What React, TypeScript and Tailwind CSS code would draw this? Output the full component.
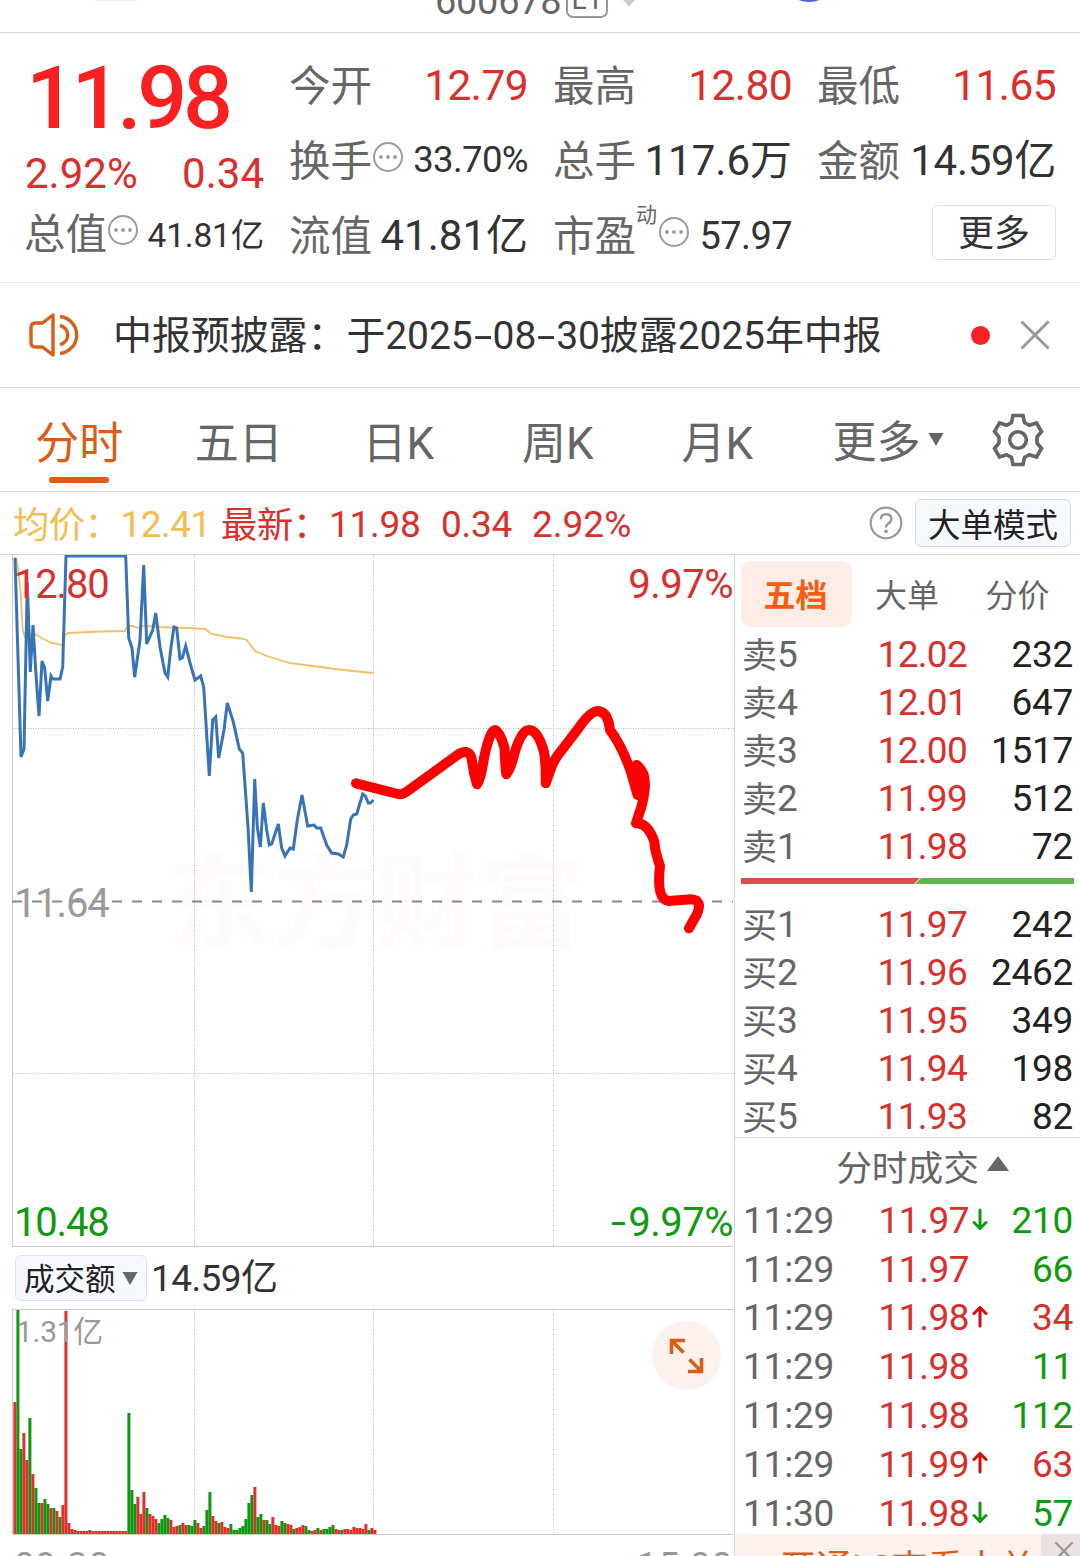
import { X } from "lucide-react";
import clsx from "clsx";

type Tone = "up" | "down";

interface Level {
  side: string;
  no: number;
  price: string;
  volume: string;
}

interface Tick {
  time: string;
  price: string;
  volume: string;
  tone: Tone;
  move?: Tone;
}

const sells: Level[] = [
  { side: "卖", no: 5, price: "12.02", volume: "232" },
  { side: "卖", no: 4, price: "12.01", volume: "647" },
  { side: "卖", no: 3, price: "12.00", volume: "1517" },
  { side: "卖", no: 2, price: "11.99", volume: "512" },
  { side: "卖", no: 1, price: "11.98", volume: "72" },
];

const buys: Level[] = [
  { side: "买", no: 1, price: "11.97", volume: "242" },
  { side: "买", no: 2, price: "11.96", volume: "2462" },
  { side: "买", no: 3, price: "11.95", volume: "349" },
  { side: "买", no: 4, price: "11.94", volume: "198" },
  { side: "买", no: 5, price: "11.93", volume: "82" },
];

const ticks: Tick[] = [
  { time: "11:29", price: "11.97", volume: "210", tone: "down", move: "down" },
  { time: "11:29", price: "11.97", volume: "66", tone: "down" },
  { time: "11:29", price: "11.98", volume: "34", tone: "up", move: "up" },
  { time: "11:29", price: "11.98", volume: "11", tone: "down" },
  { time: "11:29", price: "11.98", volume: "112", tone: "down" },
  { time: "11:29", price: "11.99", volume: "63", tone: "up", move: "up" },
  { time: "11:30", price: "11.98", volume: "57", tone: "down", move: "down" },
];

const tabs = ["分时", "五日", "日K", "周K", "月K"];

// 分时价格线
const priceLine =
  "15,2.7 21,202 24,194 27.3,27 30.3,117 33,70 36,120 39,161 42,106 44.7,113 47.7,146 51,121 52.7,124 60,124 62.7,112 66,1 125.7,1 128.7,83 132,93 134.7,122 140,85 143.7,10 146.7,89 152.7,75 155.7,58 160,92 165,118 167.7,122 171,92 174,72 176.7,73 180,104 182.3,103 185.7,91 190,108 195,125 200.7,121 203.7,132 209.3,221 212.7,165 215.7,162 218.7,203 224,175 227.3,148 233.3,167 239.3,194 242.7,198 248,272 251.3,337 254.7,224 257.3,272 260.3,292 263.3,248 266.7,275 269.3,290 271.7,289 278.3,269 281.7,293 285,301 290,293 293.3,294 297.3,265 302,240 307.7,271 314,270 316.7,273 320.7,273 326.7,290 331.7,298 338.3,299 343.3,302 346.7,290 350.7,264 353.3,260 356.7,259 362.7,239 365.3,241 368.3,248 370.3,248 373.5,245";

// 均价线
const averageLine =
  "16,3 17.3,8 20.7,38 22.7,75 25,82 30,79 35,79 41.7,83 51.7,88 62.3,90 65,80 68.3,78 100,76.5 125,76 127.3,71 132.7,71 138.3,73 143.3,71 160,72 186.7,73 205,74 211.7,79 226.7,82 241.7,83.5 246.7,85 255,96 266.7,101 290,108 320,112 343.3,115 373.3,118";

// 手绘预测走势
const sketchPath =
  "M356 228.3 L398 239 Q402 240 407 236.500 L456 201 Q468 192 471.500 203 Q473 212 474 218 L477 229.300 Q481 224 484 203 Q490 175 495 175 Q500 177 504.500 193 Q505 208 506.300 219.300 Q511 213 514 200 Q521 175 529 175 Q538 175 544 197 Q546 208 545.700 228.300 Q548 222 550 216 Q553 207 558 200 L578 174 Q590 156 598.300 156 Q608 157 610 175 Q622 191 631 217 L637.500 240 L640 225 L636.700 210 Q647 218 644.500 236 Q643 248 640 256 L636 268.300 Q648 268 654.300 286.700 Q655 297 660 311 Q656 345 669 346 L691 344.300 Q703 345 697 359 L689 373.300";

const volumes =
  "r132 g224 g85 r101 r74 g116 r60 g46 g31 r31 g35 g30 r26 g26 r23 g17 r29 r223 r11 r5 r4 r3 r3 r3 r3 r4 r3 r3 r3 r3 r3 r3 r3 r3 r3 r3 r3 r3 g121 g44 g30 r37 r20 r42 g26 r20 r18 r15 g11 g15 g19 g16 r14 r7 r8 g9 r11 r9 g9 g8 g14 r11 r6 g8 g24 g42 r18 r13 g11 r12 r7 r6 g10 g4 g4 g6 g8 g15 g31 g39 r47 g17 g20 r14 g14 g10 r17 r9 r8 g13 g11 r10 r9 g5 r6 r7 r9 g8 g4 r3 r4 g6 r4 g5 g5 g7 g9 r5 r4 g4 r5 r5 r4 r7 r6 r6 r5 r10 g4 r6 r4".split(
    " "
  );

function MoreDots() {
  return (
    <svg width="32" height="32" viewBox="0 0 32 32" className="shrink-0">
      <circle cx="16" cy="16" r="14" fill="none" stroke="#9b9b9b" strokeWidth="2" />
      <circle cx="9" cy="16" r="1.9" fill="#9b9b9b" />
      <circle cx="16" cy="16" r="1.9" fill="#9b9b9b" />
      <circle cx="23" cy="16" r="1.9" fill="#9b9b9b" />
    </svg>
  );
}

function Triangle({ up = false }: { up?: boolean }) {
  return (
    <svg width="22" height="15" viewBox="0 0 22 15" className="shrink-0">
      <path d={up ? "M0 15 L11 0 L22 15 Z" : "M3.500 1 L18.500 1 L11 14 Z"} fill="#666" />
    </svg>
  );
}

function MoveArrow({ move }: { move: Tone }) {
  return (
    <svg width="16" height="24" viewBox="0 0 16 24" fill="none" strokeWidth="3" strokeLinecap="round">
      {move === "up" ? (
        <path d="M8 20 V1.500 M2 7.500 L8 1.500 L14 7.500" stroke="#d80c0c" />
      ) : (
        <path d="M8 2 V20.500 M2 14.500 L8 20.500 L14 14.500" stroke="#0f9a0f" />
      )}
    </svg>
  );
}

// 日期里的短横比字体自带的宽
function DateDash() {
  return <span className="inline-block w-5 scale-x-[1.7] text-center">-</span>;
}

function QuoteItem({
  label,
  value,
  valueClass = "text-[42px] text-[#333]",
  dots = false,
  sup,
}: {
  label: string;
  value: string;
  valueClass?: string;
  dots?: boolean;
  sup?: string;
}) {
  return (
    <div className="flex h-[75px] items-center justify-between">
      <div className="-ml-px flex items-center">
        <span className="pt-[3px] text-[41.5px] text-[#666]">{label}</span>
        {sup && <span className="-mt-10 w-[22px] text-[21px] text-[#666]">{sup}</span>}
        {dots && (
          <span className="-mt-2">
            <MoreDots />
          </span>
        )}
      </div>
      <span className={valueClass}>{value}</span>
    </div>
  );
}

function LevelRow({ level }: { level: Level }) {
  return (
    <div className="flex h-12 items-center text-[37px]">
      <span className="flex w-[110px] items-center text-[#666]">
        <span className="pt-1 text-[35px]">{level.side}</span>
        {level.no}
      </span>
      <span className="w-[115px] text-right tracking-[-0.7px] text-[#d9302e]">{level.price}</span>
      <span className="flex-1 text-right tracking-[-0.3px] text-[#222]">{level.volume}</span>
    </div>
  );
}

export default function App() {
  return (
    <div className="flex h-[1556px] w-[1080px] flex-col overflow-hidden bg-white font-['Roboto','Noto_Sans_CJK_SC',sans-serif] leading-none whitespace-nowrap">
      {/* 顶部标题栏(滚动后只露出底边) */}
      <header className="relative h-[33px] shrink-0 border-b border-[#d5d6da]">
        <span className="absolute top-[-18px] left-[435px] text-[38px] tracking-[-0.3px] text-[#666]">
          600678
        </span>
        <span className="absolute top-[-22px] left-[566px] flex h-10 w-[42px] items-end justify-center rounded-[7px] border-2 border-[#999] pb-0.5 text-[28px] text-[#666]">
          L1
        </span>
        <svg width="14" height="8" viewBox="0 0 14 8" className="absolute top-0 left-[622px]">
          <path d="M0 -1 H14 L7 6.500 Z" fill="#ccc" />
        </svg>
        <span className="absolute -top-14 left-[780px] h-[58px] w-[58px] rounded-full bg-[#4864d8]" />
        <span className="absolute top-0 left-[95px] h-px w-[43px] bg-[#fbeee6]" />
      </header>

      {/* 行情摘要 */}
      <section className="grid h-[250px] shrink-0 grid-cols-[239px_238px_238px_238px] gap-x-[26px] border-b border-[#ececec] pt-[15px] pl-[25px]">
        <div>
          <div className="ml-px h-[103px] pt-[6px] text-[88px] leading-[88px] font-medium tracking-[-4.4px] text-[#f82020]">
            11.98
          </div>
          <div className="flex h-[45px] items-center justify-between text-[42px] text-[#d9302e]">
            <span>2.92%</span>
            <span>0.34</span>
          </div>
          <QuoteItem label="总值" value="41.81亿" dots valueClass="pt-1 text-[33.5px] tracking-[-0.2px] text-[#333]" />
        </div>
        <div>
          <QuoteItem label="今开" value="12.79" valueClass="pt-0.5 text-[42.5px] tracking-[-0.6px] text-[#d9302e]" />
          <QuoteItem label="换手" value="33.70%" dots valueClass="text-[36.5px] tracking-[-0.6px] text-[#333]" />
          <QuoteItem label="流值" value="41.81亿" />
        </div>
        <div>
          <QuoteItem label="最高" value="12.80" valueClass="pt-0.5 text-[42.5px] tracking-[-0.6px] text-[#d9302e]" />
          <QuoteItem label="总手" value="117.6万" />
          <QuoteItem label="市盈" value="57.97" sup="动" dots valueClass="text-[38px] tracking-[-0.6px] text-[#333]" />
        </div>
        <div>
          <QuoteItem label="最低" value="11.65" valueClass="pt-0.5 text-[42.5px] tracking-[-0.6px] text-[#d9302e]" />
          <QuoteItem label="金额" value="14.59亿" valueClass="text-[42px] tracking-[-0.3px] text-[#333]" />
          <div className="flex h-[68px] items-center justify-end">
            <button className="h-[55px] w-[124px] rounded-md border border-[#e2e2e6] pt-1 text-[36px] text-[#333]">
              更多
            </button>
          </div>
        </div>
      </section>

      {/* 公告 */}
      <section className="flex h-[105px] shrink-0 items-center border-b border-[#d8d8d8] pl-[29px]">
        <svg width="52" height="44" viewBox="0 0 52 44" fill="none" stroke="#d95f16" strokeWidth="3.400">
          <path d="M24 2 V42 L13.500 34 H6.500 Q2 34 2 29.500 V14.500 Q2 10 6.500 10 H13.500 Z" strokeLinejoin="round" />
          <path d="M31 12.500 A9.700 9.700 0 0 1 31 31.500" />
          <path d="M31 3.500 A18.600 18.600 0 0 1 31 40.500" />
        </svg>
        <span className="ml-8 pt-[3px] text-[39px] tracking-[-0.1px] text-[#333]">
          中报预披露：于2025
          <DateDash />
          08
          <DateDash />
          30披露2025年中报
        </span>
        <span className="mr-[25px] ml-auto h-[19px] w-[19px] rounded-full bg-[#f82020]" />
        <svg width="40" height="40" viewBox="0 0 40 40" className="mr-[25px]">
          <path d="M6.500 6.500 L33.500 33.500 M33.500 6.500 L6.500 33.500" stroke="#999" strokeWidth="3" />
        </svg>
      </section>

      {/* 周期切换 */}
      <nav className="flex h-[104px] shrink-0 border-b border-[#d8d8d8] text-[44px] text-[#666]">
        {tabs.map((tab, i) => (
          <div
            key={tab}
            className={clsx(
              "-ml-px flex w-[160.5px] flex-col items-center pt-[34px]",
              i === 0 && "text-[#dd5b12]"
            )}
          >
            <span>{tab}</span>
            {i === 0 && <span className="mt-[11px] h-1.5 w-[60px] rounded-full bg-[#e0590f]" />}
          </div>
        ))}
        <div className="flex h-full items-center pl-[35px]">
          <span className="pt-1.5">更多</span>
          <span className="ml-1">
            <Triangle />
          </span>
        </div>
        <svg
          width="54"
          height="54"
          viewBox="0 0 54 54"
          className="mt-[25px] ml-11"
          fill="none"
          stroke="#666"
          strokeWidth="3.600"
        >
          <path d="M22 2.500 H32 L33.500 9.500 L38.500 12.300 L45.500 10 L50.500 18.500 L46 24 V30 L50.500 35.500 L45.500 44 L38.500 41.700 L33.500 44.500 L32 51.500 H22 L20.500 44.500 L15.500 41.700 L8.500 44 L3.500 35.500 L8 30 V24 L3.500 18.500 L8.500 10 L15.500 12.300 L20.500 9.500 Z" />
          <circle cx="27" cy="27" r="8.300" />
        </svg>
      </nav>

      {/* 均价 / 最新 */}
      <section className="flex h-[63px] shrink-0 items-center border-b border-[#d5d6da] pl-[13px] text-[37px] text-[#d9302e]">
        <span className="flex w-[208px] items-center tracking-[-0.5px] text-[#f3bd50]">
          <span className="pt-1.5 text-[36.3px]">均价：</span>
          <span className="pt-[3px]">12.41</span>
        </span>
        <span className="flex w-[220px] items-center tracking-[-0.3px]">
          <span className="pt-1.5 text-[36.3px]">最新：</span>
          <span className="pt-[3px]">11.98</span>
        </span>
        <span className="w-[91px] pt-0.5 tracking-[-0.3px]">0.34</span>
        <span className="pt-0.5">2.92%</span>
        <svg width="34" height="34" viewBox="0 0 34 34" className="mr-3 ml-auto">
          <circle cx="17" cy="17" r="15.300" fill="none" stroke="#999" strokeWidth="2.200" />
          <path
            d="M11.800 13.300 Q12 8.300 17 8.300 Q22.300 8.300 22.300 13 Q22.300 15.500 19.500 17.300 Q17 18.900 17 21.500"
            fill="none"
            stroke="#999"
            strokeWidth="2.400"
          />
          <circle cx="17" cy="25.300" r="1.900" fill="#999" />
        </svg>
        <button className="mr-[9px] h-12 w-[156px] rounded-md border border-[#d5d9e2] bg-[#f6f9ff] pt-1.5 text-[32.5px] text-[#222]">
          大单模式
        </button>
      </section>

      <main className="flex min-h-0 flex-1">
        <div className="w-[734px] shrink-0">
          {/* 分时图 */}
          <div className="relative h-[692px]">
            <svg width="734" height="692" viewBox="0 0 734 692" className="block" fill="none">
              <text
                x="168"
                y="385"
                fontSize="103"
                fontWeight="700"
                letterSpacing="1"
                fill="#fefafe"
                className="font-['Noto_Sans_CJK_SC',sans-serif]"
              >
                东方财富
              </text>
              <g stroke="#bbb" strokeDasharray="1 1.500">
                <path d="M194.500 0 V691 M373.500 0 V691 M553.500 0 V691" />
                <path d="M13 173.500 H734 M13 518.500 H734" />
              </g>
              <path d="M12.500 0 V691.500 H733" stroke="#ccc" />
              <path d="M12 346.500 H733" stroke="#888" strokeWidth="2" strokeDasharray="10 10" />
              <polyline points={averageLine} stroke="#f0c062" strokeWidth="1.800" />
              <polyline points={priceLine} stroke="#3873b8" strokeWidth="3" />
              <path
                d={sketchPath}
                stroke="#ff0000"
                strokeWidth="10"
                strokeLinecap="round"
                strokeLinejoin="round"
              />
            </svg>
            <span className="absolute top-[10px] left-3.5 text-[40px] tracking-[-1.2px] text-[#d9302e]">12.80</span>
            <span className="absolute top-[10px] right-px text-[40px] tracking-[-0.5px] text-[#d9302e]">9.97%</span>
            <span className="absolute top-[329px] left-3.5 text-[40px] tracking-[-1.2px] text-[#9b9b9b]">11.64</span>
            <span className="absolute top-[648px] left-3.5 text-[40px] tracking-[-1.2px] text-[#0f9a0f]">10.48</span>
            <span className="absolute top-[648px] right-px text-[40px] tracking-[-0.5px] text-[#0f9a0f]">
              <span className="inline-block w-[17px] origin-left scale-x-[1.35]">-</span>
              9.97%
            </span>
          </div>

          {/* 成交额 */}
          <div className="flex h-[62px] items-center pl-[15px]">
            <button className="flex h-[46px] w-[132px] items-center rounded-md border border-[#dfe3ec] bg-[#f6f9ff] pl-2 text-[30.5px] text-[#222]">
              <span className="pt-1">成交额</span>
              <span className="ml-[3px]">
                <Triangle />
              </span>
            </button>
            <span className="ml-1 text-[37px] tracking-[-0.6px] text-[#333]">14.59亿</span>
          </div>
          <div className="relative h-[226px]">
            <svg width="734" height="226" viewBox="0 0 734 226" className="block">
              <path d="M733 0.500 H12.500 V225.500 H733" fill="none" stroke="#ccc" />
              <path
                d="M194.500 0 V225 M373.500 0 V225 M553.500 0 V225"
                stroke="#bbb"
                strokeDasharray="1 1.500"
              />
              {volumes.map((bar, i) => {
                const height = Number(bar.slice(1));
                return (
                  <rect
                    key={i}
                    x={13.4 + i * 3}
                    y={225 - height}
                    width="3"
                    height={height}
                    fill={bar[0] === "r" ? "#e22e2c" : "#0f970f"}
                  />
                );
              })}
            </svg>
            <span className="absolute top-[8px] left-4 text-[30px] tracking-[-0.3px] text-[#999]">1.31亿</span>
            <button className="absolute top-3 left-[652px] h-[69px] w-[69px] rounded-full bg-[#fdf1ed]">
              <svg width="69" height="69" viewBox="0 0 69 69" fill="none" stroke="#dd5b12" strokeWidth="3.600">
                <path d="M33 19.500 H19.500 V33 M19.500 19.500 L31.500 31.500" />
                <path d="M36 50.500 H49.500 V37 M49.500 50.500 L37.500 38.500" />
              </svg>
            </button>
          </div>
          <div className="flex justify-between pt-3 pr-px pl-3.5 text-[37px] tracking-[0.8px] text-[#999]">
            <span>09:30</span>
            <span>15:00</span>
          </div>
        </div>

        {/* 盘口 */}
        <aside className="flex flex-1 flex-col border-l border-[#d5d6da]">
          <div className="mt-1.5 flex h-[66px] shrink-0 items-center pl-1.5 text-[32px] text-[#666]">
            <span className="flex h-full w-[111px] items-center justify-center rounded-[10px] bg-[#feede6] pt-1 pr-0.5 font-bold text-[#f85c10]">
              五档
            </span>
            <span className="w-[110px] pt-1 text-center">大单</span>
            <span className="w-[111px] pt-1 text-center">分价</span>
          </div>
          <div className="mt-[3px] pr-[7px] pl-[7px]">
            {sells.map((level) => (
              <LevelRow key={level.no} level={level} />
            ))}
          </div>
          <svg width="333" height="6" viewBox="0 0 333 6" className="mt-2 ml-1.5 shrink-0">
            <path d="M0 0 H179 L173 6 H0 Z" fill="#e04c4c" />
            <path d="M180 0 H333 V6 H174 Z" fill="#62b54a" />
          </svg>
          <div className="mt-4 h-[237px] shrink-0 pr-[7px] pl-[7px]">
            {buys.map((level) => (
              <LevelRow key={level.no} level={level} />
            ))}
          </div>
          <div className="flex h-[59px] shrink-0 items-center justify-center gap-2 border-t border-[#d8d8d8] pl-[30px] text-[35.7px] text-[#666]">
            <span className="pt-1.5">分时成交</span>
            <span className="mb-2">
              <Triangle up />
            </span>
          </div>
          <div className="h-[338px] shrink-0 pr-[7px] pl-2">
            {ticks.map((tick, i) => (
              <div key={i} className="flex h-[48.8px] items-center text-[37px]">
                <span className="w-[110px] tracking-[-0.2px] text-[#666]">{tick.time}</span>
                <span className="w-[116px] text-right tracking-[-0.5px] text-[#d9302e]">{tick.price}</span>
                <span className="w-6 pl-[3px]">{tick.move && <MoveArrow move={tick.move} />}</span>
                <span
                  className={clsx(
                    "flex-1 text-right tracking-[-0.3px]",
                    tick.tone === "up" ? "text-[#d9302e]" : "text-[#0f9a0f]"
                  )}
                >
                  {tick.volume}
                </span>
              </div>
            ))}
          </div>
          <div className="flex flex-1 justify-between overflow-hidden bg-[#fdf1ed]">
            <span className="pt-[17px] pl-[45px] text-[36px] text-[#dd5b12]">开通L2查看大单</span>
            <span className="flex h-[33px] w-[39px] shrink-0 items-center justify-center bg-[#ebe1df] pl-1.5">
              <X className="h-8 w-8 text-[#999]" strokeWidth={1.7} />
            </span>
          </div>
        </aside>
      </main>
    </div>
  );
}
